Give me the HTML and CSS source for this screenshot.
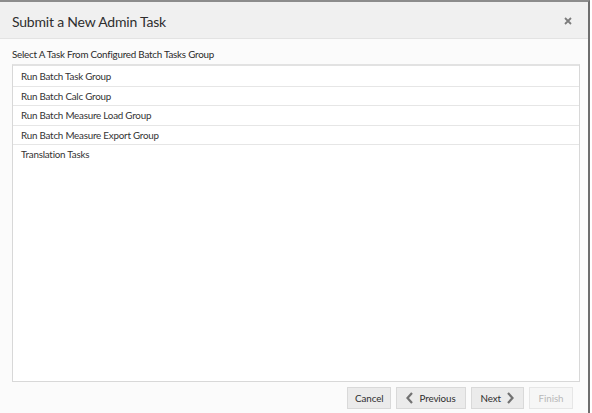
FILE: index.html
```html
<!DOCTYPE html>
<html lang="en">
<head>
    <meta charset="UTF-8">
    <meta name="viewport" content="width=device-width, initial-scale=1.0">
    <title>Submit a New Admin Task</title>
    <link rel="stylesheet" href="styles.css">
</head>
<body>
    <div class="dialog">
        <div class="dialog-header">
            <h1 class="dialog-title">Submit a New Admin Task</h1>
            <button class="close-btn" title="Close">
                <svg width="8" height="8" viewBox="0 0 8 8"><path d="M1 1l6 6M7 1L1 7" stroke="#7c7c7c" stroke-width="1.8"/></svg>
            </button>
        </div>

        <div class="dialog-body">
            <p class="field-label">Select A Task From Configured Batch Tasks Group</p>
            <ul class="task-list">
                <li>Run Batch Task Group</li>
                <li>Run Batch Calc Group</li>
                <li>Run Batch Measure Load Group</li>
                <li>Run Batch Measure Export Group</li>
                <li>Translation Tasks</li>
            </ul>
        </div>

        <div class="dialog-footer">
            <button class="btn">Cancel</button>
            <button class="btn btn-nav">
                <svg class="chev" width="7" height="12" viewBox="0 0 7 12"><path d="M6 1L1.5 6 6 11" fill="none" stroke="#727272" stroke-width="2.2"/></svg>
                Previous
            </button>
            <button class="btn btn-nav">
                Next
                <svg class="chev" width="7" height="12" viewBox="0 0 7 12"><path d="M1 1l4.5 5L1 11" fill="none" stroke="#727272" stroke-width="2.2"/></svg>
            </button>
            <button class="btn" disabled>Finish</button>
        </div>
    </div>
</body>
</html>
```

FILE: styles.css
```css
*{
    margin: 0;
    padding: 0;
    box-sizing: border-box;
}
body{
    background-color: #fff;
    font-family: Lato, "Open Sans", sans-serif;
    color: #333;
}
li{
    list-style: none;
}
.dialog{
    width: 590px;
    height: 413px;
    display: flex;
    flex-direction: column;
    background-color: #fbfbfb;
    border-top: 2px solid #8c8c8c;
    border-right: 2px solid #6e6e6e;
}
/* header */
.dialog-header{
    height: 37px;
    display: flex;
    align-items: center;
    justify-content: space-between;
    padding: 2px 16px 0 12px;
    background-color: #f0f0f0;
    border-bottom: 1px solid #e3e3e3;
}
.dialog-title{
    font-size: 14px;
    letter-spacing: -0.2px;
    font-weight: normal;
    color: #2e2e2e;
}
.close-btn{
    display: flex;
    border: none;
    background: none;
    cursor: pointer;
}
/* body */
.dialog-body{
    flex: 1;
    padding: 8px 8px 0 12px;
    display: flex;
    flex-direction: column;
}
.field-label{
    font-size: 9.8px;
    letter-spacing: -0.22px;
    line-height: 14px;
    margin-bottom: 3px;
    color: #2a2a2a;
}
.task-list{
    height: 318px;
    background-color: #fff;
    border: 1px solid #d8d8d8;
    border-top: 2px solid #e2e2e2;
}
.task-list li{
    height: 19.5px;
    line-height: 18.5px;
    padding-left: 8px;
    font-size: 9.8px;
    letter-spacing: -0.22px;
    color: #333;
    border-bottom: 1px solid #e6e6e6;
    cursor: pointer;
}
.task-list li:first-child{
    height: 20.5px;
    line-height: 20px;
}
.task-list li:last-child{
    border-bottom: none;
}
/* footer */
.dialog-footer{
    height: 31px;
    display: flex;
    justify-content: flex-end;
    align-items: flex-start;
    gap: 5px;
    padding: 5px 15px 0 0;
}
.btn{
    height: 22px;
    min-width: 44px;
    display: flex;
    align-items: center;
    justify-content: center;
    gap: 6px;
    padding: 0 7px;
    font-family: Lato, "Open Sans", sans-serif;
    font-size: 9.8px;
    letter-spacing: -0.1px;
    color: #2e2e2e;
    background-color: #ebebeb;
    border: 1px solid #d9d9d9;
    cursor: pointer;
}
.btn-nav{
    padding: 0 9px;
}
.btn:disabled{
    color: #b8b8b8;
    background-color: #f6f6f6;
    border-color: #e6e6e6;
    cursor: default;
}
.chev{
    display: block;
}
```
